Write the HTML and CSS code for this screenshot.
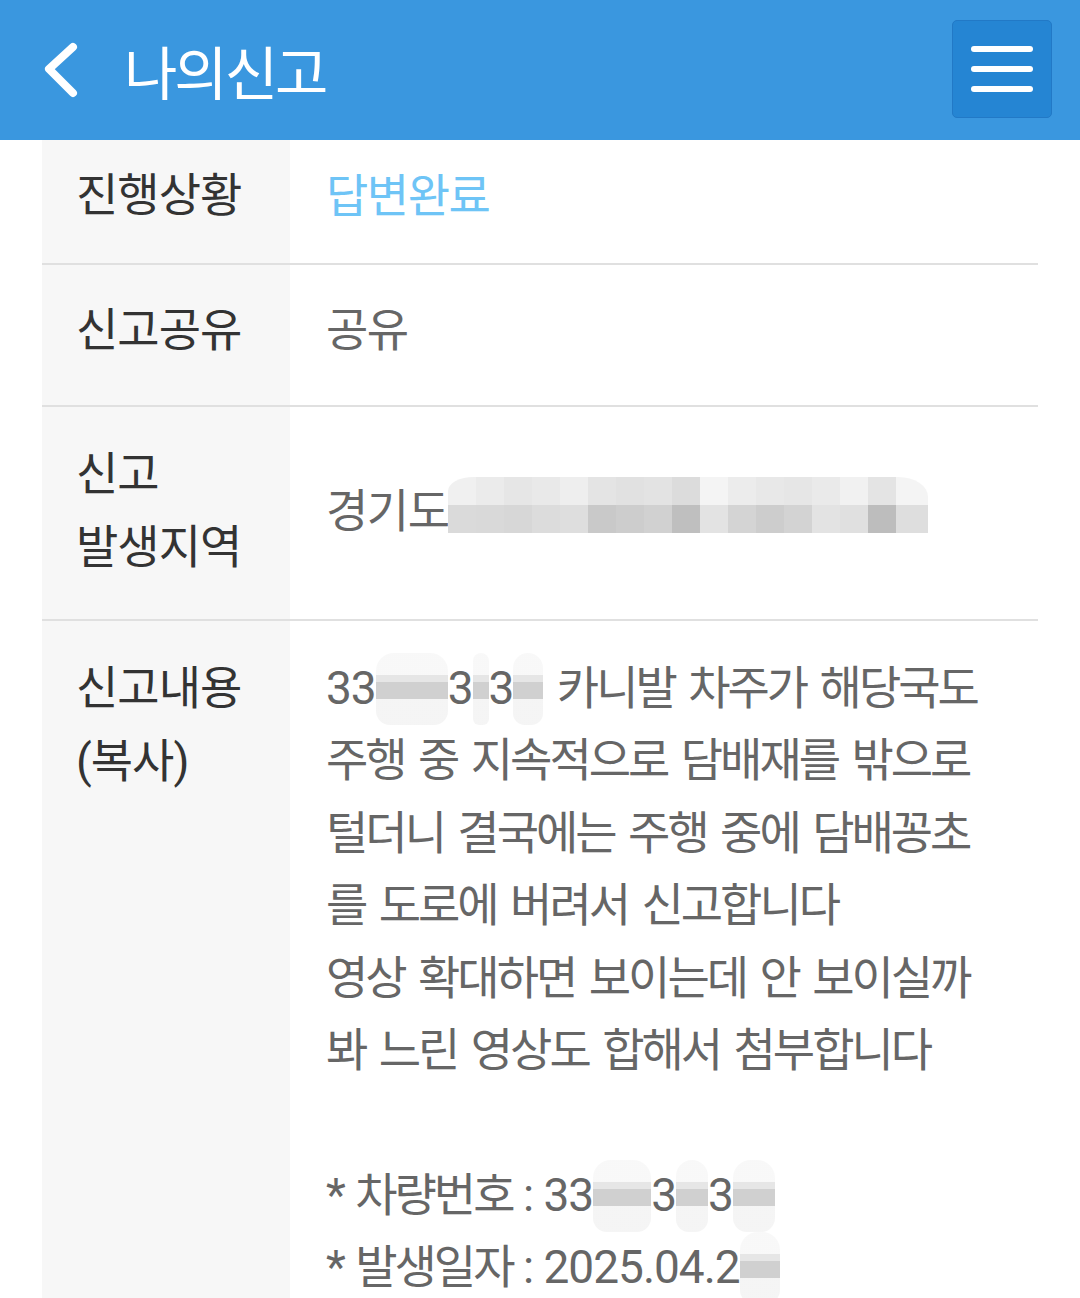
FILE: index.html
```html
<!DOCTYPE html>
<html lang="ko">
<head>
<meta charset="utf-8">
<title>나의신고</title>
<link rel="stylesheet" href="styles.css">
</head>
<body>
<header class="topbar">
  <svg class="back" width="40" height="60" viewBox="0 0 40 60" aria-hidden="true">
    <path d="M31 6 L7 28 L31 52" fill="none" stroke="#fff" stroke-width="8" stroke-linecap="round" stroke-linejoin="round"/>
  </svg>
  <h1 class="title">나의신고</h1>
  <button class="menu" type="button" aria-label="메뉴">
    <span class="bar"></span><span class="bar"></span><span class="bar"></span>
  </button>
</header>

<main class="info">
  <div class="row r1">
    <div class="th">진행상황</div>
    <div class="td status">답변완료</div>
  </div>
  <div class="row r2">
    <div class="th">신고공유</div>
    <div class="td">공유</div>
  </div>
  <div class="row r3">
    <div class="th">신고<br>발생지역</div>
    <div class="td">경기도<span class="mosaic"></span></div>
  </div>
  <div class="row r4">
    <div class="th top">신고내용<br>(복사)</div>
    <div class="td top content">
      <p class="line"><span class="num">33</span><span class="smudge w72"></span><span class="num">3</span><span class="smudge w16"></span><span class="num">3</span><span class="smudge w30"></span> 카니발 차주가 해당국도</p>
      <p class="line">주행 중 지속적으로 담배재를 밖으로</p>
      <p class="line">털더니 결국에는 주행 중에 담배꽁초</p>
      <p class="line">를 도로에 버려서 신고합니다</p>
      <p class="line">영상 확대하면 보이는데 안 보이실까</p>
      <p class="line">봐 느린 영상도 합해서 첨부합니다</p>
      <p class="line blank">&nbsp;</p>
      <p class="line"><span class="num">* </span>차량번호<span class="num"> : 33</span><span class="smudge w58"></span><span class="num">3</span><span class="smudge w32"></span><span class="num">3</span><span class="smudge w42"></span></p>
      <p class="line"><span class="num">* </span>발생일자<span class="num"> : 2025.04.2</span><span class="smudge w40"></span></p>
    </div>
  </div>
</main>
</body>
</html>
```
FILE: styles.css
```css
html, body {
  margin: 0;
  padding: 0;
  background: #ffffff;
}

body {
  font-family: "Roboto", "Noto Sans CJK KR", sans-serif;
  overflow: hidden;
}

.topbar {
  height: 140px;
  background: #3a97df;
  display: flex;
  align-items: center;
  padding: 0 28px 0 42px;
  box-sizing: border-box;
}

.back {
  display: block;
  flex: none;
  margin-top: 2px;
}

.title {
  margin: 0 0 0 42px;
  font-family: "Noto Sans CJK KR", sans-serif;
  font-weight: 400;
  font-size: 58px;
  letter-spacing: -3px;
  color: #ffffff;
  line-height: 1;
}

.menu {
  margin-left: auto;
  width: 100px;
  height: 98px;
  margin-top: -2px;
  background: #2585d3;
  border: 1px solid #2279c6;
  border-radius: 5px;
  display: flex;
  flex-direction: column;
  justify-content: center;
  align-items: center;
  gap: 14px;
  padding: 0;
  box-sizing: border-box;
}

.bar {
  display: block;
  width: 62px;
  height: 6px;
  border-radius: 3px;
  background: #ffffff;
}

.info {
  margin: 0 42px;
}

.row {
  display: grid;
  grid-template-columns: 248px 1fr;
  border-bottom: 2px solid #e0e0e0;
}

.th {
  background: #f7f7f7;
  padding-left: 34px;
  display: flex;
  align-items: center;
  color: #333333;
  font-family: "Roboto", "Noto Sans CJK KR", sans-serif;
  font-size: 46px;
  letter-spacing: -1px;
  line-height: 73px;
}

.td {
  padding-left: 36px;
  display: flex;
  align-items: center;
  color: #666666;
  font-size: 46px;
  letter-spacing: -1.5px;
  line-height: 72px;
  white-space: nowrap;
}

.status {
  color: #6ec4f6;
}

.r1 { height: 123px; }
.r1 .th, .r1 .td { padding-bottom: 12px; }

.r2 { height: 140px; }
.r2 .th, .r2 .td { padding-bottom: 10px; }

.r3 { height: 212px; }
.r3 .th, .r3 .td { padding-bottom: 4px; }

.r4 { min-height: 720px; }
.top {
  align-items: flex-start;
  padding-top: 31px;
}

.content {
  flex-direction: column;
  letter-spacing: -3px;
  word-spacing: 5px;
}

.line {
  margin: 0;
  height: 72.4px;
  line-height: 72.4px;
}

.num {
  letter-spacing: -1px;
  word-spacing: 0;
}

.mosaic {
  display: inline-block;
  width: 480px;
  height: 56px;
  margin-top: -12px;
  border-top-left-radius: 26px 14px;
  border-top-right-radius: 30px 20px;
  background:
    linear-gradient(to right,
      #f0f0f0 0 28px, #ebebeb 28px 56px, #e6e6e6 56px 84px, #e9e9e9 84px 112px,
      #eeeeee 112px 140px, #e4e4e4 140px 168px, #e1e1e1 168px 196px, #e3e3e3 196px 224px,
      #dcdcdc 224px 252px, #f4f4f4 252px 280px, #ececec 280px 308px, #e8e8e8 308px 336px,
      #e6e6e6 336px 364px, #eaeaea 364px 392px, #f1f1f1 392px 420px, #e4e4e4 420px 448px,
      #f4f4f4 448px 480px) top / 100% 50% no-repeat,
    linear-gradient(to right,
      #dadada 0 28px, #d9d9d9 28px 56px, #d7d7d7 56px 84px, #dcdcdc 84px 112px,
      #dedede 112px 140px, #c9c9c9 140px 168px, #cdcdcd 168px 196px, #d1d1d1 196px 224px,
      #bfbfbf 224px 252px, #e3e3e3 252px 280px, #d4d4d4 280px 308px, #cdcdcd 308px 336px,
      #d3d3d3 336px 364px, #e3e3e3 364px 392px, #e0e0e0 392px 420px, #bdbdbd 420px 448px,
      #dedede 448px 480px) bottom / 100% 50% no-repeat;
}

.smudge {
  display: inline-block;
  height: 72px;
  vertical-align: middle;
  margin-top: -6px;
  border-radius: 18px 18px 14px 14px;
  background:
    linear-gradient(to bottom,
      rgba(240,240,240,0.45) 0 30%,
      #e6e6e6 30% 40%,
      #d0d0d0 40% 64%,
      rgba(238,238,238,0.6) 64% 100%);
}

.w16 { width: 16px; }
.w30 { width: 30px; }
.w32 { width: 32px; }
.w40 { width: 40px; }
.w42 { width: 42px; }
.w58 { width: 58px; }
.w72 { width: 72px; }
```
